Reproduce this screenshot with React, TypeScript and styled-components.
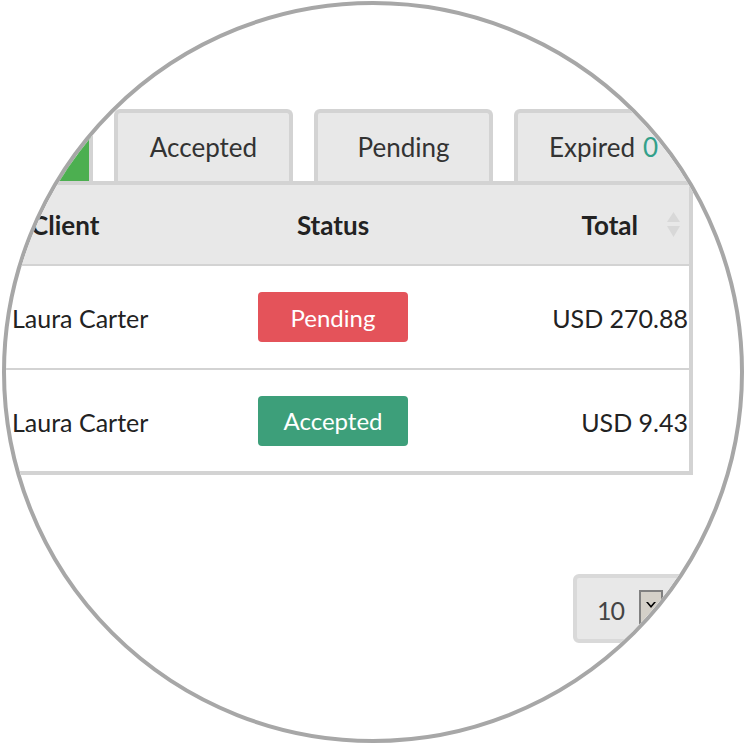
import React from "react";
import styled, {createGlobalStyle} from "styled-components";

const GlobalStyle = createGlobalStyle`
  html, body {
    margin: 0;
    padding: 0;
    background: #ffffff;
  }
  * {
    box-sizing: border-box;
  }
`

type Row = { client: string, status: "Pending" | "Accepted", total: string }

const rows: Row[] = [
    {client: "Laura Carter", status: "Pending", total: "USD 270.88"},
    {client: "Laura Carter", status: "Accepted", total: "USD 9.43"},
]

const SortIcon = () => (
    <svg width="13" height="25" viewBox="0 0 13 25">
        <path d="M6.5 0 L13 10 L0 10 Z" fill="#d8d8d8"/>
        <path d="M0 14 L13 14 L6.5 25 Z" fill="#d8d8d8"/>
    </svg>
)

const App = () => {
    return (
        <>
            <GlobalStyle/>
            <Lens>
                <Page>
                    <Tabs>
                        {/* active tab, its label falls outside the lens */}
                        <Tab active/>
                        <Tab>Accepted</Tab>
                        <Tab>Pending</Tab>
                        <Tab>Expired <Count>0</Count></Tab>
                    </Tabs>
                    <Table>
                        <HeadRow>
                            <HeadCell pad={113}>Client</HeadCell>
                            <HeadCell align="center">Status</HeadCell>
                            <HeadCell align="right" pad={9}>
                                Total
                                <SortIcon/>
                            </HeadCell>
                        </HeadRow>
                        {rows.map((r, i) => (
                            <BodyRow key={i} last={i === rows.length - 1}>
                                <Cell pad={94}>{r.client}</Cell>
                                <Cell align="center">
                                    <Badge kind={r.status}>{r.status}</Badge>
                                </Cell>
                                <Cell align="right" pad={1}>{r.total}</Cell>
                            </BodyRow>
                        ))}
                    </Table>
                    <Footer>
                        <PageSize>
                            <SizeValue>10</SizeValue>
                            <SelectButton>
                                <svg width="10" height="8" viewBox="0 0 10 8">
                                    <path d="M0 0 L5 6 L10 0 L8 0 L5 3.5 L2 0 Z" fill="#000"/>
                                </svg>
                            </SelectButton>
                        </PageSize>
                    </Footer>
                </Page>
            </Lens>
        </>
    )
}

export default App

const Lens = styled.div`
  width: 742px;
  height: 742px;
  margin: 1px 0 0 2px;
  border: 4px solid #a7a7a7;
  border-radius: 50%;
  overflow: hidden;
  background: #ffffff;
  font-family: "Lato", "Open Sans", sans-serif;
  color: #222222;
`
const Page = styled.div`
  width: 900px;
  margin-left: -92px;
  padding-top: 104px;
`
const Tabs = styled.div`
  display: flex;
  gap: 21px;
  height: 72px;
`
const Tab = styled.div<{ active?: boolean }>`
  width: 179px;
  height: 72px;
  display: flex;
  align-items: center;
  justify-content: center;
  gap: 8px;
  border: 4px solid #d3d3d3;
  border-bottom: none;
  border-radius: 6px 6px 0 0;
  background: ${props => props.active ? "#4caf50" : "#e8e8e8"};
  color: ${props => props.active ? "#ffffff" : "#333333"};
  font-size: 26px;
`
const Count = styled.span`
  color: #33a08a;
`
const Table = styled.div`
  width: 779px;
  border: 4px solid #d3d3d3;
`
const Grid = styled.div`
  display: grid;
  grid-template-columns: 290px 250px 231px;
`
const HeadRow = styled(Grid)`
  height: 81px;
  background: #e8e8e8;
  border-bottom: 2px solid #d3d3d3;
  font-size: 26px;
  font-weight: 700;
`
const BodyRow = styled(Grid)<{ last?: boolean }>`
  height: ${props => props.last ? "101px" : "104px"};
  border-bottom: ${props => props.last ? "none" : "2px solid #d3d3d3"};
  font-size: 25px;
`
const HeadCell = styled.div<{ align?: "center" | "right", pad?: number }>`
  display: flex;
  align-items: center;
  gap: 29px;
  justify-content: ${props => props.align === "center" ? "center" : props.align === "right" ? "flex-end" : "flex-start"};
  padding-left: ${props => props.align ? 0 : props.pad}px;
  padding-right: ${props => props.align === "right" ? props.pad : 0}px;
`
const Cell = styled.div<{ align?: "center" | "right", pad?: number }>`
  display: flex;
  align-items: center;
  justify-content: ${props => props.align === "center" ? "center" : props.align === "right" ? "flex-end" : "flex-start"};
  padding-left: ${props => props.align ? 0 : props.pad}px;
  padding-right: ${props => props.align === "right" ? props.pad : 0}px;
  padding-top: 2px;
`
const Badge = styled.div<{ kind: "Pending" | "Accepted" }>`
  width: 150px;
  height: 50px;
  margin-top: -2px;
  display: flex;
  align-items: center;
  justify-content: center;
  border-radius: 4px;
  background: ${props => props.kind === "Pending" ? "#e4535a" : "#3d9f7a"};
  color: #ffffff;
  font-size: 24px;
`
const Footer = styled.div`
  display: flex;
  padding: 99px 0 0 659px;
`
const PageSize = styled.div`
  width: 130px;
  height: 69px;
  display: flex;
  align-items: center;
  gap: 15px;
  padding: 2px 0 0 20px;
  border: 4px solid #d9d9d9;
  border-radius: 6px;
  background: #e8e8e8;
`
const SizeValue = styled.span`
  font-size: 25px;
  color: #444444;
  letter-spacing: -1px;
`
const SelectButton = styled.div`
  width: 24px;
  height: 34px;
  margin-top: -6px;
  display: flex;
  align-items: flex-start;
  justify-content: center;
  padding-top: 10px;
  border: 2px solid #808080;
  background: #d4d0c8;
`
